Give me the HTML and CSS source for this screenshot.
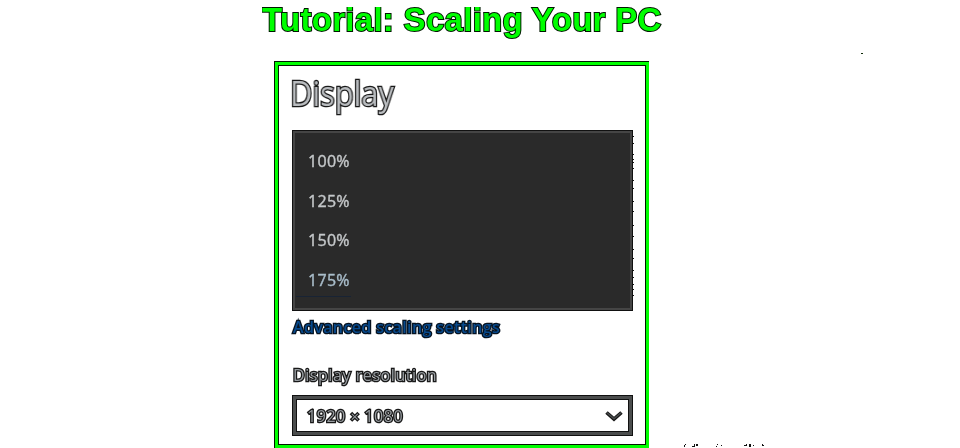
FILE: index.html
```html
<!DOCTYPE html>
<html lang="en">
<head>
<meta charset="utf-8">
<title>Tutorial: Scaling Your PC</title>
<link rel="stylesheet" href="styles.css">
</head>
<body>
<main class="page">
  <h1 class="title">Tutorial: Scaling Your PC</h1>
  <section class="panel">
    <h2 class="heading"><span>Display</span></h2>
    <ul class="options">
      <li><span>100%</span></li>
      <li><span>125%</span></li>
      <li><span>150%</span></li>
      <li class="current"><span>175%</span></li>
    </ul>
    <a class="link"><span>Advanced scaling settings</span></a>
    <div class="label"><span>Display resolution</span></div>
    <div class="select">
      <span class="value">1920 <small>×</small> 1080</span>
      <svg class="chevron" width="18" height="12" viewBox="0 0 18 12"><path d="M1.5 2.5 9 9.2 16.5 2.5" fill="none" stroke="#161616" stroke-width="3.6"/><path d="M2 2.8 9 8.8 16 2.8" fill="none" stroke="#484b4c" stroke-width="1.5"/></svg>
    </div>
  </section>
</main>
<svg class="specks" width="960" height="448" viewBox="0 0 960 448" shape-rendering="crispEdges">
  <path fill="#102b08" d="M861 53h2v1h-2z"/>
  <path stroke="#111" d="M633.5 136v1m0 6v1m0 10v1m0 4v1m0 2v1m0 5v1m0 11v1m0 7v1m0 12v1m0 9v1m0 13v1m0 10v1m0 12v1m0 8v1m0 11v1m0 6v1m0 6v1m0 4v1m0 5v1"/>
  <path fill="#111" d="M685 444h1v1h-1zM684 445h1v2h-1zM692 446h2v1h-2zM694 444h1v3h-1zM696 444h2v2h-2zM717 444h1v1h-1zM716 446h1v1h-1zM721 445h1v1h-1zM744 445h2v1h-2zM746 444h1v2h-1zM749 444h2v3h-2zM753 445h1v1h-1zM762 444h1v2h-1zM763 445h1v1h-1z"/>
</svg>
</body>
</html>
```
FILE: styles.css
```css
* { box-sizing: border-box; }
body {
  margin: 0;
  width: 960px;
  height: 448px;
  overflow: hidden;
  background: #fff;
  font-family: "Open Sans", "Noto Sans", sans-serif;
}
.page { padding: 1px 0 0 262px; }
.title {
  height: 60px;
  margin: 0;
  padding-top: 1px;
  font: bold 33px/36px "Liberation Sans", Arial, sans-serif;
  letter-spacing: 0.29px;
  color: #0f0;
  white-space: nowrap;
  -webkit-text-stroke: 2px #001900;
  paint-order: stroke;
  clip-path: inset(6px 0 0 0);
  will-change: transform;
}
.panel {
  width: 375px;
  height: 387px;
  margin-left: 12px;
  padding: 4px 15px 0 17px;
  border: 1px solid #001900;
  border-right: 0;
  border-bottom: 0;
  box-shadow: inset 0 0 0 3px #0f0, inset 0 0 0 4px #001900;
}
.heading, .label, .link, .select {
  -webkit-text-stroke: 2.6px #181818;
  paint-order: stroke;
  white-space: nowrap;
}
.heading span, .label span, .link span, .value, .options span {
  display: inline-block;
  will-change: transform;
}
.heading {
  margin: 0;
  height: 64px;
  font-size: 34px;
  font-weight: 400;
  line-height: 54px;
  color: #b9bcbf;
}
.heading span {
  margin-left: -2px;
  transform: scaleX(0.905);
  transform-origin: 0 0;
}
.options {
  width: 341px;
  height: 181px;
  margin: 0;
  padding: 9px 14px 0 15px;
  list-style: none;
  background: #2a2a2a;
  border: 1px solid #111;
  box-shadow: inset 0 0 0 2px #454545;
  color: #c4c7c9;
  font-size: 16px;
  letter-spacing: 0.3px;
  -webkit-text-stroke: 0.4px currentColor;
}
.options li { height: 39.6px; line-height: 42px; }
.options .current {
  color: #a9bdca;
  margin-left: -12px;
  padding-left: 12px;
  background: linear-gradient(#182334, #182334) 0 37px / 55px 1px no-repeat;
}
.link {
  display: block;
  height: 48px;
  padding-left: 1px;
  line-height: 33px;
  font-size: 16px;
  font-weight: 600;
  letter-spacing: 0.37px;
  color: #07498c;
  -webkit-text-stroke-color: #061321;
}
.label {
  height: 36px;
  padding-left: 1px;
  line-height: 32px;
  font-size: 16px;
  font-weight: 500;
  letter-spacing: 0.57px;
  color: #979ca0;
}
.select {
  display: flex;
  align-items: center;
  justify-content: space-between;
  width: 341px;
  height: 41px;
  padding: 0 6px 0 11px;
  border: 4px solid #4b4d4d;
  outline: 1px solid #111;
  outline-offset: -1px;
  box-shadow: inset 0 0 0 1px #111;
  font-size: 16px;
  font-weight: 500;
  letter-spacing: 0.55px;
  color: #979ca0;
}
.value small { font-size: 15px; }
.specks { position: absolute; inset: 0; pointer-events: none; }
```
